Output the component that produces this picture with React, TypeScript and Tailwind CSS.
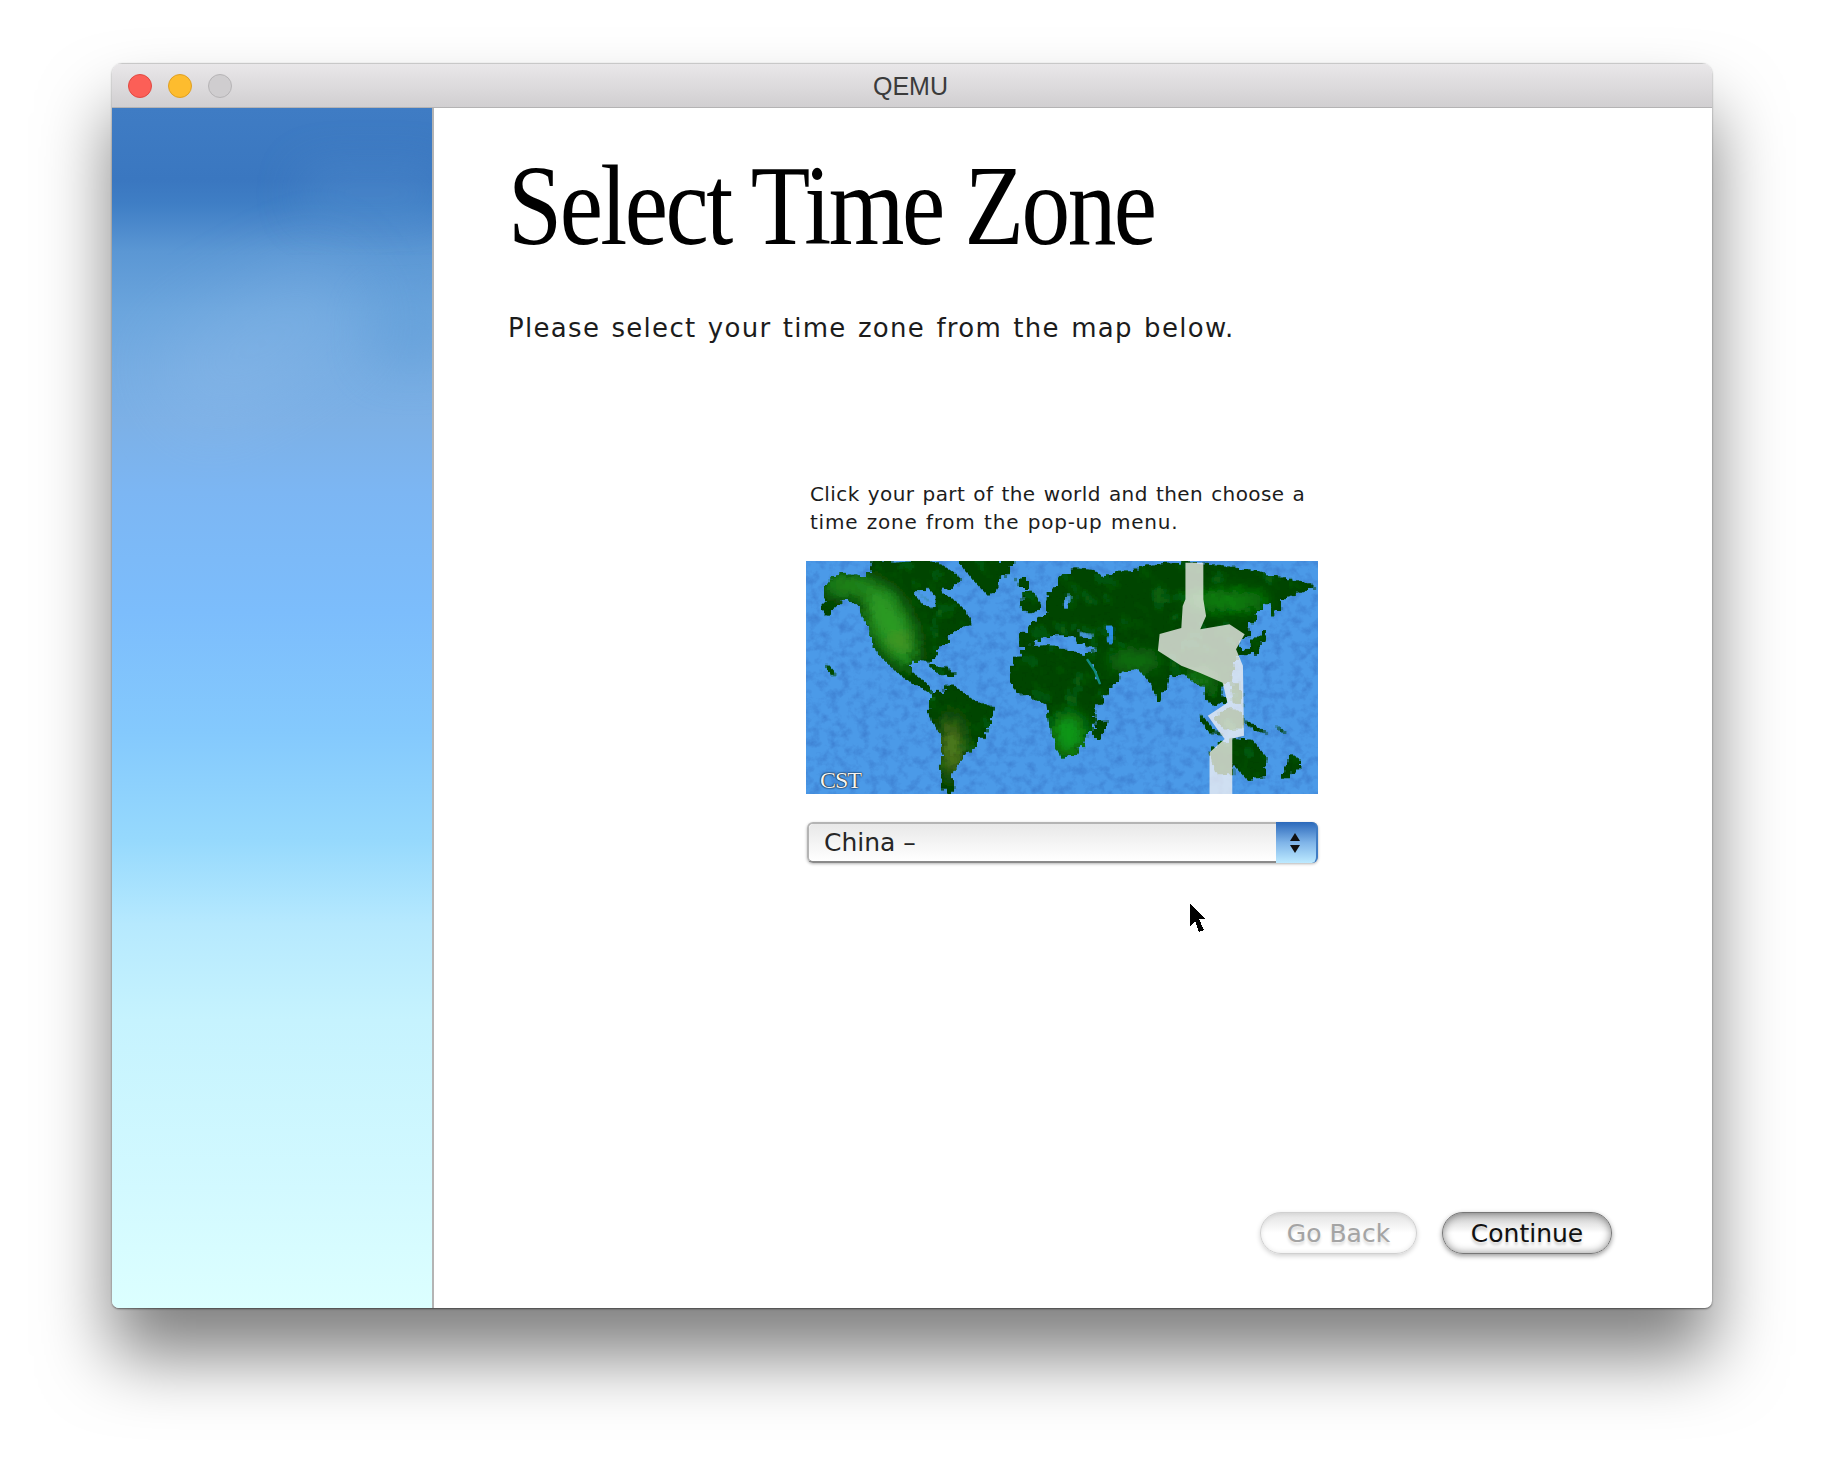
import React from "react";

// coordinates follow the map's own 1487x700 grid
const land = [
  // north america
  "100,350 125,315 160,308 225,325 235,290 245,270 300,275 340,272 400,272 440,285 490,320 470,345 430,360 480,395 510,425 525,460 490,465 455,500 420,550 415,575 375,560 345,580 345,600 375,625 395,640 410,665 385,650 340,625 300,590 250,540 235,480 200,400 160,380 100,430",
  // greenland, iceland, uk
  "490,270 655,270 620,310 580,375 530,320",
  "660,330 685,320 685,345 665,345",
  "670,395 700,360 730,410 700,425 670,410",
  // eurasia
  "668,490 690,480 700,460 750,430 745,395 780,340 800,310 830,295 880,300 905,320 1000,300 1060,285 1150,276 1250,285 1330,300 1400,315 1520,345 1490,360 1440,375 1420,385 1425,400 1400,435 1395,385 1370,400 1340,440 1330,480 1300,520 1310,540 1290,570 1280,630 1250,640 1260,690 1230,700 1215,690 1205,640 1170,630 1140,600 1100,610 1070,695 1045,630 1010,590 960,600 955,625 905,650 885,580 860,560 895,530 830,510 825,490 780,490 740,490 690,525 668,525",
  // africa
  "640,620 650,575 690,530 750,525 820,545 870,565 890,630 905,650 935,645 885,710 870,780 830,845 785,855 760,780 750,700 700,675 660,665",
  // south america
  "410,680 470,645 530,690 595,715 570,790 500,860 470,900 475,960 445,960 440,880 445,800 405,730",
  // australia and islands
  "1284,805 1340,810 1380,860 1380,915 1330,925 1290,880",
  "1218,845 1284,803 1284,905 1240,905",
  "1450,850 1480,870 1450,920 1425,920 1450,880",
  "890,760 920,745 900,800 885,800",
  "1385,475 1350,510 1310,555 1350,540 1370,520",
  "1185,725 1230,780 1260,795 1215,780",
  "1320,750 1395,795 1340,770",
  "1410,765 1445,790 1420,775",
  "1280,640 1310,640 1310,700 1285,690",
  "1235,745 1280,715 1315,730 1310,770 1260,770",
  "405,585 485,605 440,610",
  "105,580 135,615 120,610",
];

const WorldMap = () => (
  <svg viewBox="46 270 1487 700" className="block w-full h-full" preserveAspectRatio="none">
    <defs>
      <filter id="pixel" filterUnits="userSpaceOnUse" x="46" y="270" width="1487" height="700">
        <feTurbulence type="fractalNoise" baseFrequency="0.05" numOctaves="3" seed="11" result="noise" />
        <feDisplacementMap in="SourceGraphic" in2="noise" scale="30" result="rough" />
        <feFlood x="49" y="273" width="3" height="3" />
        <feComposite x="46" y="270" width="9" height="9" />
        <feTile result="grid" />
        <feComposite in="rough" in2="grid" operator="in" />
        <feMorphology operator="dilate" radius="3" />
        <feGaussianBlur stdDeviation="1.2" />
      </filter>
      <filter id="water" x="0" y="0" width="100%" height="100%" colorInterpolationFilters="sRGB">
        <feTurbulence type="fractalNoise" baseFrequency="0.035" numOctaves="4" seed="8" />
        <feColorMatrix values="0 0 0 0 0.24  0 0 0 0 0.5  0 0 0 0 0.82  2 0 0 0 -0.85" />
      </filter>
      <filter id="mottle" x="0" y="0" width="100%" height="100%" colorInterpolationFilters="sRGB">
        <feTurbulence type="fractalNoise" baseFrequency="0.02" numOctaves="3" seed="3" />
        <feColorMatrix values="0 0 0 0 0.04  0 0 0 0 0.42  0 0 0 0 0.06  2 0 0 0 -1.05" />
      </filter>
      <filter id="soft"><feGaussianBlur stdDeviation="22" /></filter>
      <pattern id="dots" width="9" height="9" patternUnits="userSpaceOnUse">
        <rect width="4" height="4" fill="#000000" opacity="0.22" />
      </pattern>
      <clipPath id="landClip">
        {land.map((p) => <polygon key={p} points={p} />)}
      </clipPath>
    </defs>
    <rect x="46" y="270" width="1487" height="700" fill="#4b9ae8" />
    <rect x="46" y="270" width="1487" height="700" filter="url(#water)" />
    <g filter="url(#pixel)">
      {land.map((p) => <polygon key={p} points={p} fill="#024402" />)}
      <polygon points="365,370 400,355 420,380 410,410 385,395" fill="#4b9ae8" />
      <polygon points="790,400 815,375 815,395 795,405" fill="#4b9ae8" />
      <polygon points="840,480 880,490 850,500" fill="#4b9ae8" />
      <polygon points="922,470 938,470 938,515 926,515" fill="#2a8fe8" />
      <g clipPath="url(#landClip)">
        <rect x="46" y="270" width="1487" height="700" filter="url(#mottle)" />
        <g filter="url(#soft)">
          <ellipse cx="290" cy="460" rx="55" ry="130" fill="#2c9a22" transform="rotate(-25 290 460)" />
          <ellipse cx="170" cy="345" rx="70" ry="24" fill="#2c9a22" />
          <ellipse cx="810" cy="790" rx="45" ry="65" fill="#0f9a12" />
          <ellipse cx="470" cy="830" rx="14" ry="90" fill="#9a9a30" />
          <ellipse cx="1270" cy="390" rx="120" ry="26" fill="#0c8a10" />
          <ellipse cx="1000" cy="570" rx="80" ry="20" fill="#138416" />
          <ellipse cx="1190" cy="630" rx="50" ry="18" fill="#1a9a1c" />
        </g>
        <ellipse cx="320" cy="510" rx="30" ry="26" fill="#8e8a30" opacity="0.35" filter="url(#soft)" />
        <rect x="46" y="270" width="1487" height="700" fill="url(#dots)" />
      </g>
    </g>
    <polyline points="862,565 885,600 900,640" fill="none" stroke="#128a80" strokeWidth="7" />
    <polygon
      points="1148,275 1200,275 1200,385 1208,435 1191,475 1276,460 1320,490 1295,535 1315,585 1318,795 1284,803 1284,970 1218,970 1218,845 1262,805 1240,775 1213,735 1270,696 1256,636 1189,606 1136,585 1068,540 1073,489 1136,471 1140,405 1148,385"
      fill="#f8f4f4"
      opacity="0.76"
    />
  </svg>
);

const App = () => {
  return (
    <div className="relative w-full h-[1468px] bg-white overflow-hidden pt-[63px] pl-[112px] font-['DejaVu_Sans',sans-serif]">
      <div className="flex flex-col w-[1600px] h-[1245px] rounded-t-[10px] rounded-b-[7px] overflow-hidden bg-white shadow-[0_48px_70px_rgba(0,0,0,0.5),0_1px_2px_rgba(0,0,0,0.5)]">
        <header className="relative shrink-0 h-[45px] flex items-center gap-4 pl-4 bg-gradient-to-b from-[#e9e7e9] to-[#d1cfd1] border-t border-t-[#c8c8c8] border-b border-b-[#b4b3b4]">
          <span className="w-6 h-6 rounded-full bg-[#fc5f57] border border-[#e14942]" />
          <span className="w-6 h-6 rounded-full bg-[#fdbc2e] border border-[#dfa023]" />
          <span className="w-6 h-6 rounded-full bg-[#cfcdcf] border border-[#b6b4b6]" />
          <span className="absolute inset-x-0 top-[7px] pr-[3px] text-center text-[25px] leading-[30px] text-[#3b3b3b] font-['Liberation_Sans',sans-serif]">
            QEMU
          </span>
        </header>

        <div className="flex flex-1 min-h-0">
          <aside className="relative w-[322px] shrink-0 border-r-2 border-r-[#b4b4b4] overflow-hidden bg-[linear-gradient(180deg,#3f7cc4_0%,#3a77c0_6%,#3f7ec5_8%,#5b97d4_12%,#6ba5dd_17%,#76ace2_22%,#7cb0e6_26%,#7cb6f3_32%,#7cbdfc_42%,#84c9fd_52%,#96d9fd_61%,#b6e9fe_68%,#c6f3fe_76%,#d2f9ff_90%,#dcffff_100%)]">
            <div className="absolute left-[50px] top-[190px] w-[200px] h-[90px] -rotate-[30deg] bg-[#a2c8f2] opacity-25 blur-2xl" />
            <div className="absolute left-[260px] top-[190px] w-[80px] h-[70px] bg-[#5a98d4] opacity-30 blur-xl" />
            <div className="absolute left-[190px] top-[60px] w-[140px] h-[50px] bg-[#6aa4dc] opacity-25 blur-xl" />
          </aside>

          <main className="flex-1 flex flex-col min-w-0">
            <h1 className="mt-[40px] ml-[74px] h-[115px] w-[800px] origin-left scale-x-[0.847] whitespace-nowrap text-black text-[115px] leading-[115px] tracking-[-3px] font-['Liberation_Serif',serif]">
              Select Time Zone
            </h1>
            <p className="mt-[47px] ml-[74px] text-[26px] leading-[36px] tracking-[1.3px] [word-spacing:1.7px] text-[#1c1c1c] whitespace-nowrap">
              Please select your time zone from the map below.
            </p>

            <div className="mt-[134px] ml-[372px] w-[512px]">
              <p className="ml-[4px] text-[20px] leading-[28px] tracking-[0.4px] [word-spacing:1.4px] text-[#1c1c1c] whitespace-nowrap">
                Click your part of the world and then choose a
                <br />
                <span className="tracking-[0.76px]">time zone from the pop-up menu.</span>
              </p>
              <div className="relative mt-[25px] h-[233px]">
                <WorldMap />
                <span className="absolute left-[14px] bottom-[1px] text-[24px] leading-[26px] tracking-[-1px] text-[#f4f4f4] font-['Liberation_Serif',serif] [text-shadow:0_0_2px_#000,0_0_1px_#000]">
                  CST
                </span>
              </div>
              <div className="mt-[28px] flex h-[41px] ml-[1px] rounded-[6px] border-[2px] border-[#b4b4b4] border-b-[#8a8a8a] shadow-[0_1px_3px_rgba(0,0,0,0.3)]">
                <div className="flex-1 flex items-center pl-[15px] rounded-l-[5px] text-[25px] text-[#262626] bg-gradient-to-b from-[#e8e8e8] via-[#f4f4f4] to-white">
                  China –
                </div>
                <div className="w-[42px] -my-[2px] -mr-[2px] pr-[2px] rounded-r-[6px] flex items-center justify-center border-r-2 border-r-[#3f7cc4] bg-gradient-to-b from-[#2a68ba] via-[#7fb4e8] to-[#bdeaff]">
                  <svg width="12" height="22" viewBox="0 0 12 22">
                    <path d="M6 1 L11 9 H1 Z M1 13 H11 L6 21 Z" fill="#101010" />
                  </svg>
                </div>
              </div>
            </div>

            <div className="mt-auto mb-[54px] mr-[100px] flex justify-end gap-[25px]">
              <button className="w-[157px] h-[42px] rounded-full text-[25px] leading-none text-[#a4a4a4] border border-[#d0d0d0] bg-gradient-to-b from-[#e2e2e2] via-white to-white shadow-[0_2px_5px_rgba(0,0,0,0.18),inset_0_0_5px_rgba(0,0,0,0.1)] [text-shadow:0_3px_3px_rgba(0,0,0,0.15)]">
                Go Back
              </button>
              <button className="w-[170px] h-[42px] rounded-full text-[25px] leading-none text-[#111111] border border-[#777777] bg-gradient-to-b from-[#c8c8c8] via-white to-white shadow-[0_2px_5px_rgba(0,0,0,0.4),inset_0_0_9px_rgba(0,0,0,0.45)] [text-shadow:0_3px_3px_rgba(0,0,0,0.22)]">
                Continue
              </button>
            </div>
          </main>
        </div>
      </div>

      {/* pointer sits over the page */}
      <svg className="absolute left-[1190px] top-[904px]" width="18" height="30" viewBox="0 0 18 30" shapeRendering="crispEdges">
        <path d="M0 0 L15 15 L9 15 L14 26 L9 28 L5 17 L0 22 Z" fill="#000000" />
      </svg>
    </div>
  );
};

export default App;
